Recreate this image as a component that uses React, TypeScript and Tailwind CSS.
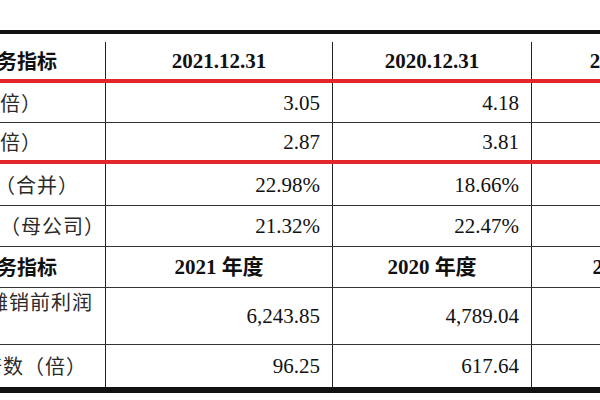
import React from "react";

const serif = "font-['Liberation_Serif','Noto_Sans_CJK_SC',serif]";
const cjk = "font-['Noto_Sans_CJK_SC',sans-serif]";

type Row = {
  label: React.ReactNode;
  labelPr: string;
  a: string;
  b: string;
  h: string;
  border: string;
};

const rows: Row[] = [
  { label: "流动比率（倍）", labelPr: "pr-[63px]", a: "3.05", b: "4.18", h: "h-[40px]", border: "border-b border-[#333]" },
  { label: "速动比率（倍）", labelPr: "pr-[63px]", a: "2.87", b: "3.81", h: "h-[41px]", border: "border-b-4 border-[#e3262b]" },
  {
    label: (
      <>
        <span className="mr-[14px]">资产负债率</span>（合并）
      </>
    ),
    labelPr: "pr-[26px]",
    a: "22.98%",
    b: "18.66%",
    h: "h-[42px]",
    border: "border-b border-[#333]",
  },
  { label: "资产负债率（母公司）", labelPr: "pr-[0px]", a: "21.32%", b: "22.47%", h: "h-[41px]", border: "border-b border-[#333]" },
];

function Cell({ children, className = "" }: { children?: React.ReactNode; className?: string }) {
  return <div className={`flex items-center border-r border-[#222] overflow-hidden ${className}`}>{children}</div>;
}

function Label({ children, pr }: { children: React.ReactNode; pr: string }) {
  return (
    <div className={`flex items-center justify-end border-r border-[#222] overflow-hidden ${pr}`}>
      <span className={`shrink-0 whitespace-nowrap ${cjk} text-[20px] leading-[28px] tracking-[1px] text-[#2a2a2a]`}>{children}</span>
    </div>
  );
}

function Num({ children }: { children?: React.ReactNode }) {
  return (
    <Cell className="justify-end pr-[12px]">
      <span className={`${serif} text-[21px] leading-[24px] text-[#111]`}>{children}</span>
    </Cell>
  );
}

function Head({ children }: { children?: React.ReactNode }) {
  return (
    <Cell className="justify-center">
      <span className={`${serif} font-bold text-[21px] leading-[24px] text-[#111] whitespace-nowrap`}>{children}</span>
    </Cell>
  );
}

const grid = "grid grid-cols-[106px_227px_199px_211px]";

export default function App() {
  return (
    <div className="w-[600px] h-[400px] overflow-hidden bg-white pt-[30px]">
      <div className="w-[743px] border-t-4 border-b-[6px] border-[#111]">
        {/* header */}
        <div className={`${grid} h-[49px] border-b-4 border-[#e3262b] pt-[8px]`}>
          <div className="flex items-center justify-end border-r border-[#222] overflow-hidden pr-[48px]">
            <span className={`shrink-0 whitespace-nowrap ${cjk} font-bold text-[20px] leading-[28px] text-[#111]`}>主要财务指标</span>
          </div>
          <Head>2021.12.31</Head>
          <Head>2020.12.31</Head>
          <Head>2019.12.31</Head>
        </div>

        {rows.map((r, i) => (
          <div key={i} className={`${grid} ${r.h} ${r.border}`}>
            <Label pr={r.labelPr}>{r.label}</Label>
            <Num>{r.a}</Num>
            <Num>{r.b}</Num>
            <Num />
          </div>
        ))}

        {/* second header */}
        <div className={`${grid} h-[41px] border-b border-[#333]`}>
          <div className="flex items-center justify-end border-r border-[#222] overflow-hidden pr-[48px]">
            <span className={`shrink-0 whitespace-nowrap ${cjk} font-bold text-[20px] leading-[28px] text-[#111]`}>主要财务指标</span>
          </div>
          <Head>2021 年度</Head>
          <Head>2020 年度</Head>
          <Head>2019 年度</Head>
        </div>

        <div className={`${grid} h-[57px] border-b border-[#333]`}>
          <div className="flex items-center justify-end border-r border-[#222] overflow-hidden pr-[12px]">
            <div className={`shrink-0 w-[189px] ${cjk} text-[20px] leading-[28px] tracking-[1px] text-[#2a2a2a]`}>
              <div className="whitespace-nowrap">息税折旧摊销前利润</div>
              <div className="whitespace-nowrap">（万元）</div>
            </div>
          </div>
          <Num>6,243.85</Num>
          <Num>4,789.04</Num>
          <Num />
        </div>

        <div className={`${grid} h-[42px]`}>
          <Label pr="pr-[18px]">利息保障倍数（倍）</Label>
          <Num>96.25</Num>
          <Num>617.64</Num>
          <Num />
        </div>
      </div>
    </div>
  );
}
